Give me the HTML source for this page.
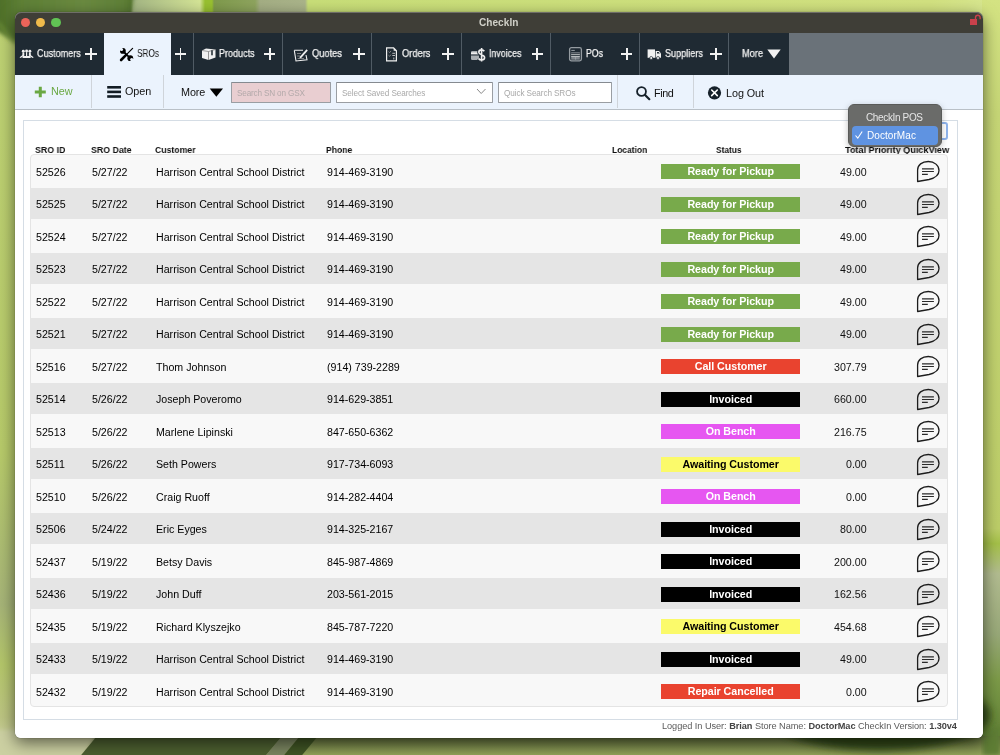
<!DOCTYPE html>
<html><head><meta charset="utf-8"><title>CheckIn</title>
<style>
html,body{margin:0;padding:0;width:1000px;height:755px;overflow:hidden;}
body{position:relative;font-family:"Liberation Sans",sans-serif;background:#b8cc70;}
.a{position:absolute;display:block;}
.t{position:absolute;white-space:nowrap;line-height:1;font-family:"Liberation Sans",sans-serif;will-change:transform;}
.bt{text-align:center;font-weight:bold;font-size:10.7px;letter-spacing:-0.05px;}
#wall{position:absolute;left:0;top:0;}
#win{position:absolute;left:15px;top:12px;width:968.4px;height:726px;border-radius:6.5px 6.5px 6px 6px;box-shadow:0 5px 16px rgba(0,0,0,0.55),0 0 1px rgba(0,0,0,0.6);background:#fff;}
</style></head><body>
<svg id="wall" width="1000" height="755" viewBox="0 0 1000 755">
<defs>
<filter id="bl" x="-10%" y="-10%" width="120%" height="120%"><feGaussianBlur stdDeviation="2"/></filter>
<filter id="bl4" x="-20%" y="-20%" width="140%" height="140%"><feGaussianBlur stdDeviation="4"/></filter>
<filter id="bl8" x="-30%" y="-30%" width="160%" height="160%"><feGaussianBlur stdDeviation="8"/></filter>
<linearGradient id="gL" x1="0" y1="0" x2="0" y2="1"><stop offset="0" stop-color="#bed274"/><stop offset="0.6" stop-color="#b7ca6a"/><stop offset="0.8" stop-color="#a6b478"/><stop offset="0.88" stop-color="#b4c66a"/><stop offset="0.95" stop-color="#bcc482"/><stop offset="1" stop-color="#d2d6aa"/></linearGradient>
<linearGradient id="gR" x1="0" y1="0" x2="0" y2="1"><stop offset="0" stop-color="#d4e382"/><stop offset="0.15" stop-color="#c6d676"/><stop offset="0.7" stop-color="#bccd68"/><stop offset="0.72" stop-color="#a4c048"/><stop offset="0.76" stop-color="#b2bc90"/><stop offset="0.84" stop-color="#98a878"/><stop offset="0.9" stop-color="#7c9a48"/><stop offset="1" stop-color="#587a30"/></linearGradient>
<linearGradient id="gB" x1="0" y1="0" x2="0" y2="1"><stop offset="0" stop-color="#5e6c3a"/><stop offset="1" stop-color="#93a35a"/></linearGradient>
<linearGradient id="gT" x1="0" y1="0" x2="1000" y2="0" gradientUnits="userSpaceOnUse"><stop offset="0" stop-color="#5a7a36"/><stop offset="0.13" stop-color="#587833"/><stop offset="0.133" stop-color="#a4b684"/><stop offset="0.2" stop-color="#d4e496"/><stop offset="0.205" stop-color="#98c030"/><stop offset="0.212" stop-color="#98c030"/><stop offset="0.214" stop-color="#7f9a4c"/><stop offset="0.255" stop-color="#8ea45e"/><stop offset="0.26" stop-color="#a4ae84"/><stop offset="0.305" stop-color="#aab48a"/><stop offset="0.308" stop-color="#c8de78"/><stop offset="0.93" stop-color="#d2e180"/><stop offset="1" stop-color="#d8e792"/></linearGradient>
</defs>
<rect width="1000" height="755" fill="#c0d270"/>
<rect x="0" y="0" width="1000" height="60" fill="url(#gT)"/>
<!-- dark top-left -->
<!-- left strip -->
<rect x="0" y="0" width="16" height="755" fill="url(#gL)"/>
<linearGradient id="gD" x1="0" y1="0" x2="140" y2="0" gradientUnits="userSpaceOnUse"><stop offset="0" stop-color="#4f7029"/><stop offset="0.15" stop-color="#5e8036"/><stop offset="0.6" stop-color="#6a8a40"/><stop offset="0.88" stop-color="#5f8038"/><stop offset="1" stop-color="#4a6a26"/></linearGradient>
<polygon points="-20,-20 136,-20 131,13 60,28 16,43 -20,20" fill="url(#gD)" filter="url(#bl)"/>
<polygon points="-2,21 16,43 16,46 -2,24" fill="#7fa040" filter="url(#bl)"/>
<!-- right strip -->
<rect x="982" y="0" width="18" height="755" fill="url(#gR)"/>
<!-- bottom -->
<rect x="0" y="736" width="1000" height="19" fill="url(#gB)"/>
<polygon points="-10,730 100,730 80,765 -10,765" fill="#ccd0a2" filter="url(#bl)"/>
<polygon points="97,736 282,736 262,760 77,760" fill="#4c5f30"/>
<polygon points="282,736 300,736 280,760 262,760" fill="#7a8560"/>
<polygon points="300,736 318,736 298,760 280,760" fill="#3f5424"/>
<ellipse cx="880" cy="715" rx="110" ry="36" fill="#2e4419" filter="url(#bl4)"/>
<polygon points="983,738 1000,725 1000,755 983,755" fill="#5e7e36" filter="url(#bl)"/>

</svg>
<div id="win"></div>
<div class="a" style="left:15.00px;top:12.00px;width:968.40px;height:21.00px;background:#3f3e37;border-radius:6.5px 6.5px 0 0;box-shadow:inset 0 1px 0 #6f6e68;"></div>
<div class="a" style="left:20.80px;top:17.70px;width:9.60px;height:9.60px;background:#ec6459;border-radius:50%;"></div>
<div class="a" style="left:35.90px;top:17.70px;width:9.60px;height:9.60px;background:#f0bb4b;border-radius:50%;"></div>
<div class="a" style="left:51.00px;top:17.70px;width:9.60px;height:9.60px;background:#61c354;border-radius:50%;"></div>
<span class="t" style="left:479.00px;top:17.81px;font-size:10.1px;font-weight:bold;color:#cfcfc7;letter-spacing:0.018px;">CheckIn</span>
<svg class="a" style="left:968px;top:14px" width="14" height="12" viewBox="0 0 14 12"><rect x="2" y="5" width="7" height="6" fill="#c9414b"/><path d="M7.5 5.5 V3.5 A2.3 2.3 0 0 1 12.1 3.5 V5.3" fill="none" stroke="#c9414b" stroke-width="1.35"/></svg>
<div class="a" style="left:15.00px;top:33.00px;width:968.40px;height:42.00px;background:#1f2a33;"></div>
<div class="a" style="left:789.00px;top:33.00px;width:194.40px;height:42.00px;background:#6a7279;"></div>
<div class="a" style="left:104.00px;top:33.00px;width:67.00px;height:42.00px;background:#ebf3fd;"></div>
<div class="a" style="left:192.90px;top:33.00px;width:1.00px;height:42.00px;background:#505b64;"></div>
<div class="a" style="left:282.10px;top:33.00px;width:1.00px;height:42.00px;background:#505b64;"></div>
<div class="a" style="left:371.10px;top:33.00px;width:1.00px;height:42.00px;background:#505b64;"></div>
<div class="a" style="left:460.50px;top:33.00px;width:1.00px;height:42.00px;background:#505b64;"></div>
<div class="a" style="left:550.10px;top:33.00px;width:1.00px;height:42.00px;background:#505b64;"></div>
<div class="a" style="left:638.90px;top:33.00px;width:1.00px;height:42.00px;background:#505b64;"></div>
<div class="a" style="left:728.10px;top:33.00px;width:1.00px;height:42.00px;background:#505b64;"></div>
<span class="t" style="left:37.10px;top:49.45px;font-size:10.3px;font-weight:normal;color:#f4f4f4;transform:scaleX(0.8775);transform-origin:0 0;-webkit-text-stroke:0.25px #f4f4f4;">Customers</span>
<div class="a" style="left:85.40px;top:53.10px;width:11.60px;height:1.80px;background:#f2f2f2;"></div>
<div class="a" style="left:90.30px;top:48.20px;width:1.80px;height:11.60px;background:#f2f2f2;"></div>
<span class="t" style="left:219.40px;top:49.45px;font-size:10.3px;font-weight:normal;color:#f4f4f4;transform:scaleX(0.8761);transform-origin:0 0;-webkit-text-stroke:0.25px #f4f4f4;">Products</span>
<div class="a" style="left:263.90px;top:53.10px;width:11.60px;height:1.80px;background:#f2f2f2;"></div>
<div class="a" style="left:268.80px;top:48.20px;width:1.80px;height:11.60px;background:#f2f2f2;"></div>
<span class="t" style="left:311.60px;top:49.45px;font-size:10.3px;font-weight:normal;color:#f4f4f4;transform:scaleX(0.9031);transform-origin:0 0;-webkit-text-stroke:0.25px #f4f4f4;">Quotes</span>
<div class="a" style="left:353.00px;top:53.10px;width:11.60px;height:1.80px;background:#f2f2f2;"></div>
<div class="a" style="left:357.90px;top:48.20px;width:1.80px;height:11.60px;background:#f2f2f2;"></div>
<span class="t" style="left:401.60px;top:49.45px;font-size:10.3px;font-weight:normal;color:#f4f4f4;transform:scaleX(0.9025);transform-origin:0 0;-webkit-text-stroke:0.25px #f4f4f4;">Orders</span>
<div class="a" style="left:442.40px;top:53.10px;width:11.60px;height:1.80px;background:#f2f2f2;"></div>
<div class="a" style="left:447.30px;top:48.20px;width:1.80px;height:11.60px;background:#f2f2f2;"></div>
<span class="t" style="left:488.60px;top:49.45px;font-size:10.3px;font-weight:normal;color:#f4f4f4;transform:scaleX(0.8571);transform-origin:0 0;-webkit-text-stroke:0.25px #f4f4f4;">Invoices</span>
<div class="a" style="left:531.50px;top:53.10px;width:11.60px;height:1.80px;background:#f2f2f2;"></div>
<div class="a" style="left:536.40px;top:48.20px;width:1.80px;height:11.60px;background:#f2f2f2;"></div>
<span class="t" style="left:586.00px;top:49.45px;font-size:10.3px;font-weight:normal;color:#f4f4f4;transform:scaleX(0.8486);transform-origin:0 0;-webkit-text-stroke:0.25px #f4f4f4;">POs</span>
<div class="a" style="left:620.90px;top:53.10px;width:11.60px;height:1.80px;background:#f2f2f2;"></div>
<div class="a" style="left:625.80px;top:48.20px;width:1.80px;height:11.60px;background:#f2f2f2;"></div>
<span class="t" style="left:664.60px;top:49.45px;font-size:10.3px;font-weight:normal;color:#f4f4f4;transform:scaleX(0.8847);transform-origin:0 0;-webkit-text-stroke:0.25px #f4f4f4;">Suppliers</span>
<div class="a" style="left:710.00px;top:53.10px;width:11.60px;height:1.80px;background:#f2f2f2;"></div>
<div class="a" style="left:714.90px;top:48.20px;width:1.80px;height:11.60px;background:#f2f2f2;"></div>
<span class="t" style="left:137.00px;top:49.45px;font-size:10.3px;font-weight:normal;color:#111;transform:scaleX(0.8015);transform-origin:0 0;">SROs</span>
<div class="a" style="left:174.60px;top:53.10px;width:11.60px;height:1.80px;background:#f2f2f2;"></div>
<div class="a" style="left:179.50px;top:48.20px;width:1.80px;height:11.60px;background:#f2f2f2;"></div>
<span class="t" style="left:741.60px;top:49.45px;font-size:10.3px;font-weight:normal;color:#f4f4f4;transform:scaleX(0.8985);transform-origin:0 0;-webkit-text-stroke:0.25px #f4f4f4;">More</span>
<svg class="a" style="left:767px;top:49px" width="14" height="10" viewBox="0 0 14 10"><path d="M0.3 0.5 H13.7 L7 9.4 Z" fill="#f2f2f2"/></svg>
<svg class="a" style="left:18px;top:48px" width="17" height="12" viewBox="0 0 17 12"><g fill="#f0f0f0"><circle cx="5.3" cy="3.3" r="1.45"/><circle cx="8.6" cy="3.0" r="1.45"/><circle cx="11.9" cy="3.3" r="1.45"/><path d="M4.5 4.6 H6.2 L6.4 7.4 L2.6 9.9 L1.5 9.2 L4.3 7.2 Z"/><path d="M12.7 4.6 H11 L10.8 7.4 L14.6 9.9 L15.7 9.2 L12.9 7.2 Z"/><rect x="8" y="4.2" width="1.2" height="4"/><path d="M5 8.1 H12.2 L12.8 9.9 H4.4 Z"/></g></svg>
<svg class="a" style="left:119px;top:47px" width="15" height="15" viewBox="0 0 15 15"><circle cx="3.9" cy="3.9" r="2.9" fill="#000"/><circle cx="2.5" cy="2.5" r="1.55" fill="#ebf3fd"/><path d="M2.5 2.5 L0 0" stroke="#ebf3fd" stroke-width="2.2"/><circle cx="11.3" cy="11.2" r="2.9" fill="#000"/><circle cx="12.7" cy="12.6" r="1.55" fill="#ebf3fd"/><path d="M12.7 12.6 L15.5 15.4" stroke="#ebf3fd" stroke-width="2.2"/><path d="M4.8 4.8 L10.4 10.3" stroke="#000" stroke-width="1.8"/><path d="M13.6 1.4 L8.2 6.8" stroke="#000" stroke-width="1.2" stroke-linecap="round"/><path d="M7.2 7.9 L2.1 13" stroke="#000" stroke-width="2.6" stroke-linecap="round"/></svg>
<svg class="a" style="left:201px;top:47px" width="16" height="14" viewBox="0 0 16 14"><path d="M1 3.5 L5 1.5 L14.5 2.5 V10.5 L7.5 13 L1 11 Z" fill="#f0f0f0"/><path d="M7.5 4.5 V13" stroke="#888" stroke-width="0.9"/><path d="M1 3.5 L7.5 4.5 L14.5 2.5" stroke="#777" stroke-width="0.7" fill="none"/><rect x="10.2" y="3.3" width="1.6" height="5" fill="#2a333a"/></svg>
<svg class="a" style="left:293px;top:47px" width="16" height="15" viewBox="0 0 16 15"><g fill="none" stroke="#f0f0f0" stroke-width="1.1"><path d="M1.3 3.3 H10 M1.3 3.3 L3 14 L14 12.8 L13 8"/><path d="M4 6.5 H8 M4.2 9 H7 M4.6 11.5 H11" stroke="#999" stroke-width="0.8"/></g><path d="M6.8 9.8 L13.5 2.3 L14.8 3.6 L8.2 11 L6.5 11.3 Z" fill="#f0f0f0"/></svg>
<svg class="a" style="left:385px;top:47px" width="13" height="15" viewBox="0 0 13 15"><path d="M1.6 0.8 H8.6 L11.4 3.8 V13.8 H1.6 Z" fill="none" stroke="#f0f0f0" stroke-width="1.2"/><path d="M8.6 0.8 V3.8 H11.4" fill="#f0f0f0"/><path d="M3.5 4.6 L4.6 5.6 L6 3.9 M3.5 8.3 L4.6 9.3 L6 7.6" stroke="#888" stroke-width="0.9" fill="none"/><path d="M7.3 6.3 H10 M7.3 8.5 H10 M8.8 10.5 V12.5" stroke="#ccc" stroke-width="0.9"/></svg>
<svg class="a" style="left:470px;top:47px" width="17" height="15" viewBox="0 0 17 15"><rect x="1" y="4" width="8" height="9" rx="1.2" fill="#a9aeb2"/><rect x="1" y="5.4" width="8" height="1.6" fill="#f0f0f0"/><rect x="1" y="7.6" width="8" height="0.9" fill="#1f2a33"/><path d="M14.3 4.3 C13.6 3.2 12.6 2.9 11.5 2.9 C9.9 2.9 8.8 3.8 8.8 5.2 C8.8 8.2 14.6 7.2 14.6 10.6 C14.6 12.1 13.3 13 11.6 13 C10.3 13 9.2 12.5 8.5 11.5 M11.6 1.1 V14.6" fill="none" stroke="#1f2a33" stroke-width="3.2"/><path d="M14.3 4.3 C13.6 3.2 12.6 2.9 11.5 2.9 C9.9 2.9 8.8 3.8 8.8 5.2 C8.8 8.2 14.6 7.2 14.6 10.6 C14.6 12.1 13.3 13 11.6 13 C10.3 13 9.2 12.5 8.5 11.5 M11.6 1.1 V14.6" fill="none" stroke="#f0f0f0" stroke-width="1.6"/></svg>
<svg class="a" style="left:568px;top:46px" width="15" height="16" viewBox="0 0 15 16"><rect x="1.6" y="1.6" width="11.8" height="13.2" rx="1.8" fill="none" stroke="#959ca1" stroke-width="1.3"/><path d="M3.3 4.4 H6.8" stroke="#a5abb0" stroke-width="0.9"/><rect x="3.2" y="6.1" width="8.6" height="7.6" fill="#7f868c"/><path d="M3.2 8.4 H11.8 M3.2 10.5 H11.8" stroke="#c5c9cc" stroke-width="0.8"/><path d="M3.2 7.3 H11.8 M3.2 9.4 H11.8" stroke="#2a333b" stroke-width="0.9"/><path d="M7.6 10.8 V13.7" stroke="#a9aeb2" stroke-width="0.7"/></svg>
<svg class="a" style="left:646px;top:48px" width="17" height="12" viewBox="0 0 17 12"><rect x="1.6" y="1.4" width="7.4" height="8.4" fill="#f0f0f0"/><path d="M9.6 3 H13 L15 5.5 V9.8 H9.6 Z" fill="#f0f0f0"/><path d="M11 4 H12.7 L13.8 5.6 H11 Z" fill="#1f2a33"/><circle cx="5.2" cy="10" r="1.5" fill="#f0f0f0" stroke="#1f2a33" stroke-width="0.7"/><circle cx="12" cy="10" r="1.5" fill="#f0f0f0" stroke="#1f2a33" stroke-width="0.7"/></svg>
<div class="a" style="left:15.00px;top:75.00px;width:968.40px;height:34.00px;background:#ebf3fd;"></div>
<div class="a" style="left:15.00px;top:108.60px;width:968.40px;height:1.00px;background:#b9c0c7;"></div>
<div class="a" style="left:90.65px;top:75.00px;width:1.50px;height:32.60px;background:#cfd4da;"></div>
<div class="a" style="left:162.65px;top:75.00px;width:1.50px;height:32.60px;background:#cfd4da;"></div>
<div class="a" style="left:616.85px;top:75.00px;width:1.50px;height:32.60px;background:#cfd4da;"></div>
<div class="a" style="left:692.65px;top:75.00px;width:1.50px;height:32.60px;background:#cfd4da;"></div>
<svg class="a" style="left:34px;top:85.5px" width="13" height="12" viewBox="0 0 13 12"><path d="M6.3 0.8 V11.3 M0.8 6.05 H11.8" stroke="#6aa843" stroke-width="3"/></svg>
<span class="t" style="left:51.20px;top:86.02px;font-size:10.8px;font-weight:normal;color:#6aa843;letter-spacing:-0.077px;">New</span>
<svg class="a" style="left:106px;top:85px" width="16" height="14" viewBox="0 0 16 14"><rect x="1.2" y="1" width="13.8" height="2.6" fill="#121c24"/><rect x="1.2" y="5.6" width="13.8" height="2.6" fill="#121c24"/><rect x="1.2" y="10.2" width="13.8" height="2.6" fill="#121c24"/></svg>
<span class="t" style="left:124.70px;top:86.02px;font-size:10.8px;font-weight:normal;color:#111;letter-spacing:-0.035px;">Open</span>
<span class="t" style="left:180.70px;top:86.72px;font-size:10.8px;font-weight:normal;color:#111;letter-spacing:-0.108px;">More</span>
<svg class="a" style="left:209px;top:87.5px" width="15" height="10" viewBox="0 0 15 10"><path d="M0.7 0.6 H14 L7.35 8.7 Z" fill="#000"/></svg>
<div class="a" style="left:231.00px;top:82.00px;width:99.60px;height:20.60px;background:#e9ced1;border:1px solid #9a9ea3;border-top-color:#858a90;box-sizing:border-box;border-radius:1px;"></div>
<span class="t" style="left:237.00px;top:90.03px;font-size:8.2px;font-weight:normal;color:#b3a9aa;letter-spacing:-0.176px;">Search SN on GSX</span>
<div class="a" style="left:336.20px;top:82.00px;width:156.60px;height:20.60px;background:#fff;border:1px solid #9a9ea3;border-top-color:#858a90;box-sizing:border-box;border-radius:1px;"></div>
<span class="t" style="left:342.00px;top:90.03px;font-size:8.2px;font-weight:normal;color:#a9a9a9;letter-spacing:-0.087px;">Select Saved Searches</span>
<svg class="a" style="left:476px;top:88px" width="11" height="7" viewBox="0 0 11 7"><path d="M1 1 L5.2 5.5 L9.5 1" fill="none" stroke="#8a8a8a" stroke-width="1"/></svg>
<div class="a" style="left:498.40px;top:82.00px;width:114.00px;height:20.60px;background:#fff;border:1px solid #9a9ea3;border-top-color:#858a90;box-sizing:border-box;border-radius:1px;"></div>
<span class="t" style="left:504.00px;top:90.03px;font-size:8.2px;font-weight:normal;color:#a9a9a9;letter-spacing:-0.109px;">Quick Search SROs</span>
<svg class="a" style="left:635px;top:85px" width="16" height="16" viewBox="0 0 16 16"><circle cx="6.5" cy="6.5" r="4.45" fill="none" stroke="#16212a" stroke-width="1.8"/><path d="M9.8 9.8 L14.3 14.2" stroke="#16212a" stroke-width="2.2" stroke-linecap="round"/></svg>
<span class="t" style="left:654.25px;top:88.02px;font-size:10.8px;font-weight:normal;color:#111;letter-spacing:-0.419px;">Find</span>
<svg class="a" style="left:707px;top:85px" width="16" height="16" viewBox="0 0 16 16"><circle cx="7.5" cy="7.8" r="6.6" fill="#16212a"/><path d="M4.7 5 L10.3 10.6 M10.3 5 L4.7 10.6" stroke="#fff" stroke-width="1.6" stroke-linecap="round"/></svg>
<span class="t" style="left:725.90px;top:87.52px;font-size:10.8px;font-weight:normal;color:#111;letter-spacing:-0.058px;">Log Out</span>
<div class="a" style="left:15.00px;top:109.60px;width:968.40px;height:628.40px;background:#fff;border-radius:0 0 6px 6px;"></div>
<div class="a" style="left:23.10px;top:119.50px;width:934.50px;height:600.00px;border:1px solid #d5dde5;box-sizing:border-box;"></div>
<div class="a" style="left:850.00px;top:121.90px;width:98.30px;height:18.50px;background:#fff;border:2px solid #8fb4ec;box-sizing:border-box;border-radius:3px;"></div>
<span class="t" style="left:34.60px;top:145.35px;font-size:9.7px;font-weight:bold;color:#111;transform:scaleX(0.9097);transform-origin:0 0;">SRO ID</span>
<span class="t" style="left:90.60px;top:145.35px;font-size:9.7px;font-weight:bold;color:#111;transform:scaleX(0.9079);transform-origin:0 0;">SRO Date</span>
<span class="t" style="left:154.60px;top:145.35px;font-size:9.7px;font-weight:bold;color:#111;transform:scaleX(0.8963);transform-origin:0 0;">Customer</span>
<span class="t" style="left:326.20px;top:145.35px;font-size:9.7px;font-weight:bold;color:#111;transform:scaleX(0.8841);transform-origin:0 0;">Phone</span>
<span class="t" style="left:611.50px;top:145.35px;font-size:9.7px;font-weight:bold;color:#111;transform:scaleX(0.8738);transform-origin:0 0;">Location</span>
<span class="t" style="left:715.80px;top:145.35px;font-size:9.7px;font-weight:bold;color:#111;transform:scaleX(0.8639);transform-origin:0 0;">Status</span>
<span class="t" style="left:845.30px;top:145.35px;font-size:9.7px;font-weight:bold;color:#111;transform:scaleX(0.9420);transform-origin:0 0;">Total Priority QuickView</span>
<div class="a" style="left:29.60px;top:154.40px;width:918.00px;height:552.50px;background:#f8f8f8;border:1px solid #e4e4e4;box-sizing:border-box;border-radius:4px;"></div>
<span class="t" style="left:36.30px;top:166.65px;font-size:10.65px;font-weight:normal;color:#000;letter-spacing:0.000px;">52526</span>
<span class="t" style="left:91.60px;top:166.65px;font-size:10.65px;font-weight:normal;color:#000;letter-spacing:0.000px;">5/27/22</span>
<span class="t" style="left:156.20px;top:166.65px;font-size:10.65px;font-weight:normal;color:#000;letter-spacing:0.000px;">Harrison Central School District</span>
<span class="t" style="left:327.20px;top:166.65px;font-size:10.65px;font-weight:normal;color:#000;letter-spacing:0.000px;">914-469-3190</span>
<div class="a" style="left:661.00px;top:164.20px;width:139.40px;height:15.20px;background:#78aa4b;"></div>
<span class="t bt" style="left:661px;top:164.20px;width:139.4px;height:15.2px;line-height:15.2px;color:#fff;">Ready for Pickup</span>
<span class="t" style="right:133.10px;top:166.65px;font-size:10.65px;color:#111;">49.00</span>
<svg class="a" style="left:915px;top:159px" width="26" height="25" viewBox="0 0 26 25"><path d="M2.6 22.5 V11 C2.6 6 7 2.5 13.3 2.5 C19.5 2.5 24 6.5 24 11.5 C24 16.5 20 19 14 20.5 Z" fill="none" stroke="#1d1d1d" stroke-width="1.3" stroke-linejoin="round"/><path d="M7 9.9 H18.9 M7 12.5 H18.9 M7 15.3 H12.8" stroke="#2a2a2a" stroke-width="1.15"/></svg>
<div class="a" style="left:30.40px;top:187.90px;width:916.60px;height:31.50px;background:#e5e5e5;"></div>
<span class="t" style="left:36.30px;top:199.15px;font-size:10.65px;font-weight:normal;color:#000;letter-spacing:0.000px;">52525</span>
<span class="t" style="left:91.60px;top:199.15px;font-size:10.65px;font-weight:normal;color:#000;letter-spacing:0.000px;">5/27/22</span>
<span class="t" style="left:156.20px;top:199.15px;font-size:10.65px;font-weight:normal;color:#000;letter-spacing:0.000px;">Harrison Central School District</span>
<span class="t" style="left:327.20px;top:199.15px;font-size:10.65px;font-weight:normal;color:#000;letter-spacing:0.000px;">914-469-3190</span>
<div class="a" style="left:661.00px;top:196.70px;width:139.40px;height:15.20px;background:#78aa4b;"></div>
<span class="t bt" style="left:661px;top:196.70px;width:139.4px;height:15.2px;line-height:15.2px;color:#fff;">Ready for Pickup</span>
<span class="t" style="right:133.10px;top:199.15px;font-size:10.65px;color:#111;">49.00</span>
<svg class="a" style="left:915px;top:192px" width="26" height="25" viewBox="0 0 26 25"><path d="M2.6 22.5 V11 C2.6 6 7 2.5 13.3 2.5 C19.5 2.5 24 6.5 24 11.5 C24 16.5 20 19 14 20.5 Z" fill="none" stroke="#1d1d1d" stroke-width="1.3" stroke-linejoin="round"/><path d="M7 9.9 H18.9 M7 12.5 H18.9 M7 15.3 H12.8" stroke="#2a2a2a" stroke-width="1.15"/></svg>
<span class="t" style="left:36.30px;top:231.65px;font-size:10.65px;font-weight:normal;color:#000;letter-spacing:0.000px;">52524</span>
<span class="t" style="left:91.60px;top:231.65px;font-size:10.65px;font-weight:normal;color:#000;letter-spacing:0.000px;">5/27/22</span>
<span class="t" style="left:156.20px;top:231.65px;font-size:10.65px;font-weight:normal;color:#000;letter-spacing:0.000px;">Harrison Central School District</span>
<span class="t" style="left:327.20px;top:231.65px;font-size:10.65px;font-weight:normal;color:#000;letter-spacing:0.000px;">914-469-3190</span>
<div class="a" style="left:661.00px;top:229.20px;width:139.40px;height:15.20px;background:#78aa4b;"></div>
<span class="t bt" style="left:661px;top:229.20px;width:139.4px;height:15.2px;line-height:15.2px;color:#fff;">Ready for Pickup</span>
<span class="t" style="right:133.10px;top:231.65px;font-size:10.65px;color:#111;">49.00</span>
<svg class="a" style="left:915px;top:224px" width="26" height="25" viewBox="0 0 26 25"><path d="M2.6 22.5 V11 C2.6 6 7 2.5 13.3 2.5 C19.5 2.5 24 6.5 24 11.5 C24 16.5 20 19 14 20.5 Z" fill="none" stroke="#1d1d1d" stroke-width="1.3" stroke-linejoin="round"/><path d="M7 9.9 H18.9 M7 12.5 H18.9 M7 15.3 H12.8" stroke="#2a2a2a" stroke-width="1.15"/></svg>
<div class="a" style="left:30.40px;top:252.90px;width:916.60px;height:31.50px;background:#e5e5e5;"></div>
<span class="t" style="left:36.30px;top:264.15px;font-size:10.65px;font-weight:normal;color:#000;letter-spacing:0.000px;">52523</span>
<span class="t" style="left:91.60px;top:264.15px;font-size:10.65px;font-weight:normal;color:#000;letter-spacing:0.000px;">5/27/22</span>
<span class="t" style="left:156.20px;top:264.15px;font-size:10.65px;font-weight:normal;color:#000;letter-spacing:0.000px;">Harrison Central School District</span>
<span class="t" style="left:327.20px;top:264.15px;font-size:10.65px;font-weight:normal;color:#000;letter-spacing:0.000px;">914-469-3190</span>
<div class="a" style="left:661.00px;top:261.70px;width:139.40px;height:15.20px;background:#78aa4b;"></div>
<span class="t bt" style="left:661px;top:261.70px;width:139.4px;height:15.2px;line-height:15.2px;color:#fff;">Ready for Pickup</span>
<span class="t" style="right:133.10px;top:264.15px;font-size:10.65px;color:#111;">49.00</span>
<svg class="a" style="left:915px;top:257px" width="26" height="25" viewBox="0 0 26 25"><path d="M2.6 22.5 V11 C2.6 6 7 2.5 13.3 2.5 C19.5 2.5 24 6.5 24 11.5 C24 16.5 20 19 14 20.5 Z" fill="none" stroke="#1d1d1d" stroke-width="1.3" stroke-linejoin="round"/><path d="M7 9.9 H18.9 M7 12.5 H18.9 M7 15.3 H12.8" stroke="#2a2a2a" stroke-width="1.15"/></svg>
<span class="t" style="left:36.30px;top:296.65px;font-size:10.65px;font-weight:normal;color:#000;letter-spacing:0.000px;">52522</span>
<span class="t" style="left:91.60px;top:296.65px;font-size:10.65px;font-weight:normal;color:#000;letter-spacing:0.000px;">5/27/22</span>
<span class="t" style="left:156.20px;top:296.65px;font-size:10.65px;font-weight:normal;color:#000;letter-spacing:0.000px;">Harrison Central School District</span>
<span class="t" style="left:327.20px;top:296.65px;font-size:10.65px;font-weight:normal;color:#000;letter-spacing:0.000px;">914-469-3190</span>
<div class="a" style="left:661.00px;top:294.20px;width:139.40px;height:15.20px;background:#78aa4b;"></div>
<span class="t bt" style="left:661px;top:294.20px;width:139.4px;height:15.2px;line-height:15.2px;color:#fff;">Ready for Pickup</span>
<span class="t" style="right:133.10px;top:296.65px;font-size:10.65px;color:#111;">49.00</span>
<svg class="a" style="left:915px;top:289px" width="26" height="25" viewBox="0 0 26 25"><path d="M2.6 22.5 V11 C2.6 6 7 2.5 13.3 2.5 C19.5 2.5 24 6.5 24 11.5 C24 16.5 20 19 14 20.5 Z" fill="none" stroke="#1d1d1d" stroke-width="1.3" stroke-linejoin="round"/><path d="M7 9.9 H18.9 M7 12.5 H18.9 M7 15.3 H12.8" stroke="#2a2a2a" stroke-width="1.15"/></svg>
<div class="a" style="left:30.40px;top:317.90px;width:916.60px;height:31.50px;background:#e5e5e5;"></div>
<span class="t" style="left:36.30px;top:329.15px;font-size:10.65px;font-weight:normal;color:#000;letter-spacing:0.000px;">52521</span>
<span class="t" style="left:91.60px;top:329.15px;font-size:10.65px;font-weight:normal;color:#000;letter-spacing:0.000px;">5/27/22</span>
<span class="t" style="left:156.20px;top:329.15px;font-size:10.65px;font-weight:normal;color:#000;letter-spacing:0.000px;">Harrison Central School District</span>
<span class="t" style="left:327.20px;top:329.15px;font-size:10.65px;font-weight:normal;color:#000;letter-spacing:0.000px;">914-469-3190</span>
<div class="a" style="left:661.00px;top:326.70px;width:139.40px;height:15.20px;background:#78aa4b;"></div>
<span class="t bt" style="left:661px;top:326.70px;width:139.4px;height:15.2px;line-height:15.2px;color:#fff;">Ready for Pickup</span>
<span class="t" style="right:133.10px;top:329.15px;font-size:10.65px;color:#111;">49.00</span>
<svg class="a" style="left:915px;top:322px" width="26" height="25" viewBox="0 0 26 25"><path d="M2.6 22.5 V11 C2.6 6 7 2.5 13.3 2.5 C19.5 2.5 24 6.5 24 11.5 C24 16.5 20 19 14 20.5 Z" fill="none" stroke="#1d1d1d" stroke-width="1.3" stroke-linejoin="round"/><path d="M7 9.9 H18.9 M7 12.5 H18.9 M7 15.3 H12.8" stroke="#2a2a2a" stroke-width="1.15"/></svg>
<span class="t" style="left:36.30px;top:361.65px;font-size:10.65px;font-weight:normal;color:#000;letter-spacing:0.000px;">52516</span>
<span class="t" style="left:91.60px;top:361.65px;font-size:10.65px;font-weight:normal;color:#000;letter-spacing:0.000px;">5/27/22</span>
<span class="t" style="left:156.20px;top:361.65px;font-size:10.65px;font-weight:normal;color:#000;letter-spacing:0.000px;">Thom Johnson</span>
<span class="t" style="left:327.20px;top:361.65px;font-size:10.65px;font-weight:normal;color:#000;letter-spacing:0.000px;">(914) 739-2289</span>
<div class="a" style="left:661.00px;top:359.20px;width:139.40px;height:15.20px;background:#e9432f;"></div>
<span class="t bt" style="left:661px;top:359.20px;width:139.4px;height:15.2px;line-height:15.2px;color:#fff;">Call Customer</span>
<span class="t" style="right:133.10px;top:361.65px;font-size:10.65px;color:#111;">307.79</span>
<svg class="a" style="left:915px;top:354px" width="26" height="25" viewBox="0 0 26 25"><path d="M2.6 22.5 V11 C2.6 6 7 2.5 13.3 2.5 C19.5 2.5 24 6.5 24 11.5 C24 16.5 20 19 14 20.5 Z" fill="none" stroke="#1d1d1d" stroke-width="1.3" stroke-linejoin="round"/><path d="M7 9.9 H18.9 M7 12.5 H18.9 M7 15.3 H12.8" stroke="#2a2a2a" stroke-width="1.15"/></svg>
<div class="a" style="left:30.40px;top:382.90px;width:916.60px;height:31.50px;background:#e5e5e5;"></div>
<span class="t" style="left:36.30px;top:394.15px;font-size:10.65px;font-weight:normal;color:#000;letter-spacing:0.000px;">52514</span>
<span class="t" style="left:91.60px;top:394.15px;font-size:10.65px;font-weight:normal;color:#000;letter-spacing:0.000px;">5/26/22</span>
<span class="t" style="left:156.20px;top:394.15px;font-size:10.65px;font-weight:normal;color:#000;letter-spacing:0.000px;">Joseph Poveromo</span>
<span class="t" style="left:327.20px;top:394.15px;font-size:10.65px;font-weight:normal;color:#000;letter-spacing:0.000px;">914-629-3851</span>
<div class="a" style="left:661.00px;top:391.70px;width:139.40px;height:15.20px;background:#000;"></div>
<span class="t bt" style="left:661px;top:391.70px;width:139.4px;height:15.2px;line-height:15.2px;color:#fff;">Invoiced</span>
<span class="t" style="right:133.10px;top:394.15px;font-size:10.65px;color:#111;">660.00</span>
<svg class="a" style="left:915px;top:387px" width="26" height="25" viewBox="0 0 26 25"><path d="M2.6 22.5 V11 C2.6 6 7 2.5 13.3 2.5 C19.5 2.5 24 6.5 24 11.5 C24 16.5 20 19 14 20.5 Z" fill="none" stroke="#1d1d1d" stroke-width="1.3" stroke-linejoin="round"/><path d="M7 9.9 H18.9 M7 12.5 H18.9 M7 15.3 H12.8" stroke="#2a2a2a" stroke-width="1.15"/></svg>
<span class="t" style="left:36.30px;top:426.65px;font-size:10.65px;font-weight:normal;color:#000;letter-spacing:0.000px;">52513</span>
<span class="t" style="left:91.60px;top:426.65px;font-size:10.65px;font-weight:normal;color:#000;letter-spacing:0.000px;">5/26/22</span>
<span class="t" style="left:156.20px;top:426.65px;font-size:10.65px;font-weight:normal;color:#000;letter-spacing:0.000px;">Marlene Lipinski</span>
<span class="t" style="left:327.20px;top:426.65px;font-size:10.65px;font-weight:normal;color:#000;letter-spacing:0.000px;">847-650-6362</span>
<div class="a" style="left:661.00px;top:424.20px;width:139.40px;height:15.20px;background:#e656f1;"></div>
<span class="t bt" style="left:661px;top:424.20px;width:139.4px;height:15.2px;line-height:15.2px;color:#fff;">On Bench</span>
<span class="t" style="right:133.10px;top:426.65px;font-size:10.65px;color:#111;">216.75</span>
<svg class="a" style="left:915px;top:419px" width="26" height="25" viewBox="0 0 26 25"><path d="M2.6 22.5 V11 C2.6 6 7 2.5 13.3 2.5 C19.5 2.5 24 6.5 24 11.5 C24 16.5 20 19 14 20.5 Z" fill="none" stroke="#1d1d1d" stroke-width="1.3" stroke-linejoin="round"/><path d="M7 9.9 H18.9 M7 12.5 H18.9 M7 15.3 H12.8" stroke="#2a2a2a" stroke-width="1.15"/></svg>
<div class="a" style="left:30.40px;top:447.90px;width:916.60px;height:31.50px;background:#e5e5e5;"></div>
<span class="t" style="left:36.30px;top:459.15px;font-size:10.65px;font-weight:normal;color:#000;letter-spacing:0.000px;">52511</span>
<span class="t" style="left:91.60px;top:459.15px;font-size:10.65px;font-weight:normal;color:#000;letter-spacing:0.000px;">5/26/22</span>
<span class="t" style="left:156.20px;top:459.15px;font-size:10.65px;font-weight:normal;color:#000;letter-spacing:0.000px;">Seth Powers</span>
<span class="t" style="left:327.20px;top:459.15px;font-size:10.65px;font-weight:normal;color:#000;letter-spacing:0.000px;">917-734-6093</span>
<div class="a" style="left:661.00px;top:456.70px;width:139.40px;height:15.20px;background:#fbfa6a;"></div>
<span class="t bt" style="left:661px;top:456.70px;width:139.4px;height:15.2px;line-height:15.2px;color:#000;">Awaiting Customer</span>
<span class="t" style="right:133.10px;top:459.15px;font-size:10.65px;color:#111;">0.00</span>
<svg class="a" style="left:915px;top:452px" width="26" height="25" viewBox="0 0 26 25"><path d="M2.6 22.5 V11 C2.6 6 7 2.5 13.3 2.5 C19.5 2.5 24 6.5 24 11.5 C24 16.5 20 19 14 20.5 Z" fill="none" stroke="#1d1d1d" stroke-width="1.3" stroke-linejoin="round"/><path d="M7 9.9 H18.9 M7 12.5 H18.9 M7 15.3 H12.8" stroke="#2a2a2a" stroke-width="1.15"/></svg>
<span class="t" style="left:36.30px;top:491.65px;font-size:10.65px;font-weight:normal;color:#000;letter-spacing:0.000px;">52510</span>
<span class="t" style="left:91.60px;top:491.65px;font-size:10.65px;font-weight:normal;color:#000;letter-spacing:0.000px;">5/26/22</span>
<span class="t" style="left:156.20px;top:491.65px;font-size:10.65px;font-weight:normal;color:#000;letter-spacing:0.000px;">Craig Ruoff</span>
<span class="t" style="left:327.20px;top:491.65px;font-size:10.65px;font-weight:normal;color:#000;letter-spacing:0.000px;">914-282-4404</span>
<div class="a" style="left:661.00px;top:489.20px;width:139.40px;height:15.20px;background:#e656f1;"></div>
<span class="t bt" style="left:661px;top:489.20px;width:139.4px;height:15.2px;line-height:15.2px;color:#fff;">On Bench</span>
<span class="t" style="right:133.10px;top:491.65px;font-size:10.65px;color:#111;">0.00</span>
<svg class="a" style="left:915px;top:484px" width="26" height="25" viewBox="0 0 26 25"><path d="M2.6 22.5 V11 C2.6 6 7 2.5 13.3 2.5 C19.5 2.5 24 6.5 24 11.5 C24 16.5 20 19 14 20.5 Z" fill="none" stroke="#1d1d1d" stroke-width="1.3" stroke-linejoin="round"/><path d="M7 9.9 H18.9 M7 12.5 H18.9 M7 15.3 H12.8" stroke="#2a2a2a" stroke-width="1.15"/></svg>
<div class="a" style="left:30.40px;top:512.90px;width:916.60px;height:31.50px;background:#e5e5e5;"></div>
<span class="t" style="left:36.30px;top:524.15px;font-size:10.65px;font-weight:normal;color:#000;letter-spacing:0.000px;">52506</span>
<span class="t" style="left:91.60px;top:524.15px;font-size:10.65px;font-weight:normal;color:#000;letter-spacing:0.000px;">5/24/22</span>
<span class="t" style="left:156.20px;top:524.15px;font-size:10.65px;font-weight:normal;color:#000;letter-spacing:0.000px;">Eric Eyges</span>
<span class="t" style="left:327.20px;top:524.15px;font-size:10.65px;font-weight:normal;color:#000;letter-spacing:0.000px;">914-325-2167</span>
<div class="a" style="left:661.00px;top:521.70px;width:139.40px;height:15.20px;background:#000;"></div>
<span class="t bt" style="left:661px;top:521.70px;width:139.4px;height:15.2px;line-height:15.2px;color:#fff;">Invoiced</span>
<span class="t" style="right:133.10px;top:524.15px;font-size:10.65px;color:#111;">80.00</span>
<svg class="a" style="left:915px;top:517px" width="26" height="25" viewBox="0 0 26 25"><path d="M2.6 22.5 V11 C2.6 6 7 2.5 13.3 2.5 C19.5 2.5 24 6.5 24 11.5 C24 16.5 20 19 14 20.5 Z" fill="none" stroke="#1d1d1d" stroke-width="1.3" stroke-linejoin="round"/><path d="M7 9.9 H18.9 M7 12.5 H18.9 M7 15.3 H12.8" stroke="#2a2a2a" stroke-width="1.15"/></svg>
<span class="t" style="left:36.30px;top:556.65px;font-size:10.65px;font-weight:normal;color:#000;letter-spacing:0.000px;">52437</span>
<span class="t" style="left:91.60px;top:556.65px;font-size:10.65px;font-weight:normal;color:#000;letter-spacing:0.000px;">5/19/22</span>
<span class="t" style="left:156.20px;top:556.65px;font-size:10.65px;font-weight:normal;color:#000;letter-spacing:0.000px;">Betsy Davis</span>
<span class="t" style="left:327.20px;top:556.65px;font-size:10.65px;font-weight:normal;color:#000;letter-spacing:0.000px;">845-987-4869</span>
<div class="a" style="left:661.00px;top:554.20px;width:139.40px;height:15.20px;background:#000;"></div>
<span class="t bt" style="left:661px;top:554.20px;width:139.4px;height:15.2px;line-height:15.2px;color:#fff;">Invoiced</span>
<span class="t" style="right:133.10px;top:556.65px;font-size:10.65px;color:#111;">200.00</span>
<svg class="a" style="left:915px;top:549px" width="26" height="25" viewBox="0 0 26 25"><path d="M2.6 22.5 V11 C2.6 6 7 2.5 13.3 2.5 C19.5 2.5 24 6.5 24 11.5 C24 16.5 20 19 14 20.5 Z" fill="none" stroke="#1d1d1d" stroke-width="1.3" stroke-linejoin="round"/><path d="M7 9.9 H18.9 M7 12.5 H18.9 M7 15.3 H12.8" stroke="#2a2a2a" stroke-width="1.15"/></svg>
<div class="a" style="left:30.40px;top:577.90px;width:916.60px;height:31.50px;background:#e5e5e5;"></div>
<span class="t" style="left:36.30px;top:589.15px;font-size:10.65px;font-weight:normal;color:#000;letter-spacing:0.000px;">52436</span>
<span class="t" style="left:91.60px;top:589.15px;font-size:10.65px;font-weight:normal;color:#000;letter-spacing:0.000px;">5/19/22</span>
<span class="t" style="left:156.20px;top:589.15px;font-size:10.65px;font-weight:normal;color:#000;letter-spacing:0.000px;">John Duff</span>
<span class="t" style="left:327.20px;top:589.15px;font-size:10.65px;font-weight:normal;color:#000;letter-spacing:0.000px;">203-561-2015</span>
<div class="a" style="left:661.00px;top:586.70px;width:139.40px;height:15.20px;background:#000;"></div>
<span class="t bt" style="left:661px;top:586.70px;width:139.4px;height:15.2px;line-height:15.2px;color:#fff;">Invoiced</span>
<span class="t" style="right:133.10px;top:589.15px;font-size:10.65px;color:#111;">162.56</span>
<svg class="a" style="left:915px;top:582px" width="26" height="25" viewBox="0 0 26 25"><path d="M2.6 22.5 V11 C2.6 6 7 2.5 13.3 2.5 C19.5 2.5 24 6.5 24 11.5 C24 16.5 20 19 14 20.5 Z" fill="none" stroke="#1d1d1d" stroke-width="1.3" stroke-linejoin="round"/><path d="M7 9.9 H18.9 M7 12.5 H18.9 M7 15.3 H12.8" stroke="#2a2a2a" stroke-width="1.15"/></svg>
<span class="t" style="left:36.30px;top:621.65px;font-size:10.65px;font-weight:normal;color:#000;letter-spacing:0.000px;">52435</span>
<span class="t" style="left:91.60px;top:621.65px;font-size:10.65px;font-weight:normal;color:#000;letter-spacing:0.000px;">5/19/22</span>
<span class="t" style="left:156.20px;top:621.65px;font-size:10.65px;font-weight:normal;color:#000;letter-spacing:0.000px;">Richard Klyszejko</span>
<span class="t" style="left:327.20px;top:621.65px;font-size:10.65px;font-weight:normal;color:#000;letter-spacing:0.000px;">845-787-7220</span>
<div class="a" style="left:661.00px;top:619.20px;width:139.40px;height:15.20px;background:#fbfa6a;"></div>
<span class="t bt" style="left:661px;top:619.20px;width:139.4px;height:15.2px;line-height:15.2px;color:#000;">Awaiting Customer</span>
<span class="t" style="right:133.10px;top:621.65px;font-size:10.65px;color:#111;">454.68</span>
<svg class="a" style="left:915px;top:614px" width="26" height="25" viewBox="0 0 26 25"><path d="M2.6 22.5 V11 C2.6 6 7 2.5 13.3 2.5 C19.5 2.5 24 6.5 24 11.5 C24 16.5 20 19 14 20.5 Z" fill="none" stroke="#1d1d1d" stroke-width="1.3" stroke-linejoin="round"/><path d="M7 9.9 H18.9 M7 12.5 H18.9 M7 15.3 H12.8" stroke="#2a2a2a" stroke-width="1.15"/></svg>
<div class="a" style="left:30.40px;top:642.90px;width:916.60px;height:31.50px;background:#e5e5e5;"></div>
<span class="t" style="left:36.30px;top:654.15px;font-size:10.65px;font-weight:normal;color:#000;letter-spacing:0.000px;">52433</span>
<span class="t" style="left:91.60px;top:654.15px;font-size:10.65px;font-weight:normal;color:#000;letter-spacing:0.000px;">5/19/22</span>
<span class="t" style="left:156.20px;top:654.15px;font-size:10.65px;font-weight:normal;color:#000;letter-spacing:0.000px;">Harrison Central School District</span>
<span class="t" style="left:327.20px;top:654.15px;font-size:10.65px;font-weight:normal;color:#000;letter-spacing:0.000px;">914-469-3190</span>
<div class="a" style="left:661.00px;top:651.70px;width:139.40px;height:15.20px;background:#000;"></div>
<span class="t bt" style="left:661px;top:651.70px;width:139.4px;height:15.2px;line-height:15.2px;color:#fff;">Invoiced</span>
<span class="t" style="right:133.10px;top:654.15px;font-size:10.65px;color:#111;">49.00</span>
<svg class="a" style="left:915px;top:647px" width="26" height="25" viewBox="0 0 26 25"><path d="M2.6 22.5 V11 C2.6 6 7 2.5 13.3 2.5 C19.5 2.5 24 6.5 24 11.5 C24 16.5 20 19 14 20.5 Z" fill="none" stroke="#1d1d1d" stroke-width="1.3" stroke-linejoin="round"/><path d="M7 9.9 H18.9 M7 12.5 H18.9 M7 15.3 H12.8" stroke="#2a2a2a" stroke-width="1.15"/></svg>
<span class="t" style="left:36.30px;top:686.65px;font-size:10.65px;font-weight:normal;color:#000;letter-spacing:0.000px;">52432</span>
<span class="t" style="left:91.60px;top:686.65px;font-size:10.65px;font-weight:normal;color:#000;letter-spacing:0.000px;">5/19/22</span>
<span class="t" style="left:156.20px;top:686.65px;font-size:10.65px;font-weight:normal;color:#000;letter-spacing:0.000px;">Harrison Central School District</span>
<span class="t" style="left:327.20px;top:686.65px;font-size:10.65px;font-weight:normal;color:#000;letter-spacing:0.000px;">914-469-3190</span>
<div class="a" style="left:661.00px;top:684.20px;width:139.40px;height:15.20px;background:#e9432f;"></div>
<span class="t bt" style="left:661px;top:684.20px;width:139.4px;height:15.2px;line-height:15.2px;color:#fff;">Repair Cancelled</span>
<span class="t" style="right:133.10px;top:686.65px;font-size:10.65px;color:#111;">0.00</span>
<svg class="a" style="left:915px;top:679px" width="26" height="25" viewBox="0 0 26 25"><path d="M2.6 22.5 V11 C2.6 6 7 2.5 13.3 2.5 C19.5 2.5 24 6.5 24 11.5 C24 16.5 20 19 14 20.5 Z" fill="none" stroke="#1d1d1d" stroke-width="1.3" stroke-linejoin="round"/><path d="M7 9.9 H18.9 M7 12.5 H18.9 M7 15.3 H12.8" stroke="#2a2a2a" stroke-width="1.15"/></svg>
<span class="t" style="left:661.8px;top:722.15px;font-size:9.2px;color:#5a5a5a;letter-spacing:-0.05px">Logged In User: <b style="color:#444">Brian</b> Store Name: <b style="color:#444">DoctorMac</b> CheckIn Version: <b style="color:#444">1.30v4</b></span>
<div class="a" style="left:847.60px;top:104.10px;width:94.40px;height:42.90px;background:#6a6b69;border-radius:6px;box-shadow:0 2px 6px rgba(0,0,0,0.25);border:0.5px solid #5a5b59;box-sizing:border-box;"></div>
<span class="t" style="left:866.40px;top:112.70px;font-size:10px;font-weight:normal;color:#e6e6e6;letter-spacing:-0.360px;">CheckIn POS</span>
<div class="a" style="left:851.80px;top:126.20px;width:86.20px;height:18.50px;background:#5f93e1;border-radius:4px;"></div>
<svg class="a" style="left:854px;top:130px" width="10" height="10" viewBox="0 0 10 10"><path d="M1.5 5.5 L3.8 8.2 L8.2 1.5" fill="none" stroke="#fff" stroke-width="1.1"/></svg>
<span class="t" style="left:866.70px;top:130.90px;font-size:10px;font-weight:normal;color:#fff;letter-spacing:0.069px;">DoctorMac</span>
</body></html>
